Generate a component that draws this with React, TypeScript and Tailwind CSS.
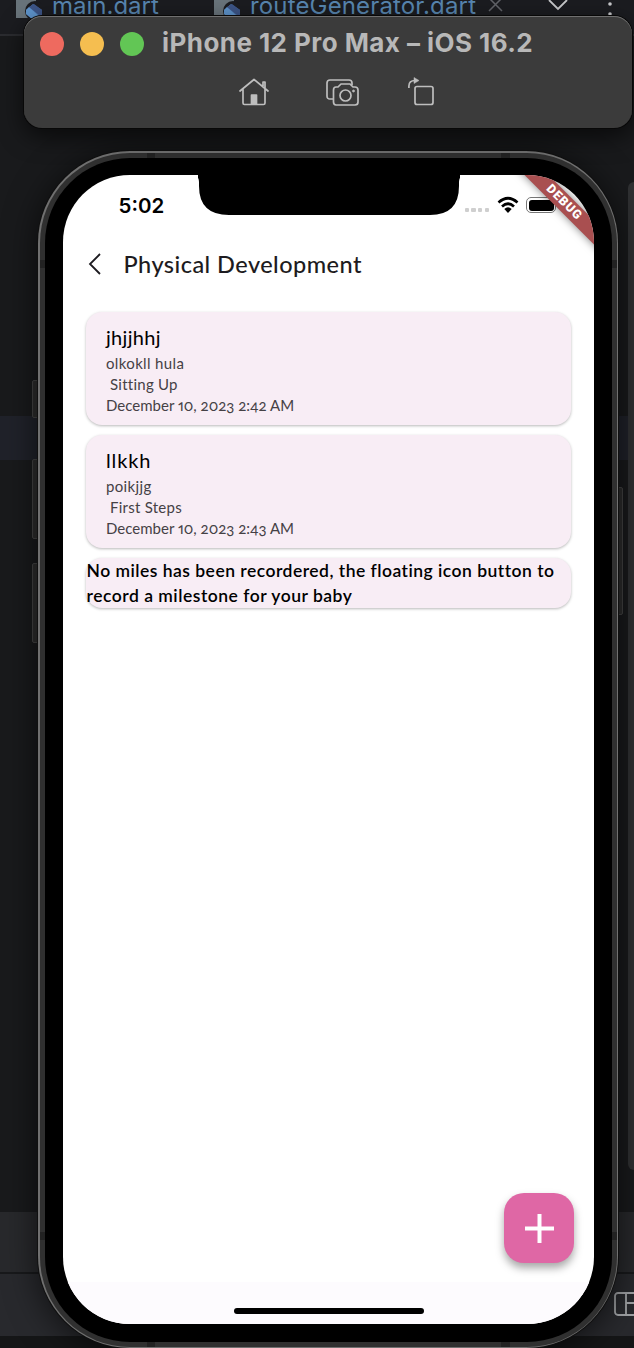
import React from "react";

type Milestone = { title: string; note: string; stage: string; date: string; titleClass: string; noteClass: string; stageClass: string };

const milestones: Milestone[] = [
  { title: "jhjjhhj", note: "olkokll hula", stage: "Sitting Up", date: "December 10, 2023 2:42 AM", titleClass: "tracking-[0.3px]", noteClass: "tracking-[0.35px]", stageClass: "tracking-[0.25px]" },
  { title: "llkkh", note: "poikjjg", stage: "First Steps", date: "December 10, 2023 2:43 AM", titleClass: "tracking-[0.9px]", noteClass: "tracking-[0.35px]", stageClass: "tracking-[0.25px]" },
];

function DartIcon() {
  return (
    <svg width="26" height="19" viewBox="0 0 26 19" className="block shrink-0">
      <path d="M0 0H20V18H0Z" fill="#69747b" />
      <circle cx="19" cy="11" r="10" fill="#1b1c20" />
      <path d="M10 10L17 4L26 10V15L22 19H16L10 14Z" fill="#4c76ad" />
      <path d="M10 10L13 7L24 17L22 19H16L10 14Z" fill="#5e94cc" />
      <path d="M13 7L18 4L26 10V15H23Z" fill="#3d5587" />
    </svg>
  );
}

function Editor() {
  return (
    <div className="flex h-full flex-col bg-[#191a1c]">
      <div className="relative flex h-[36px] shrink-0 items-start border-b-2 border-[#2b2c30] bg-[#1b1c20] text-[24px] text-[#5886b0]">
        <div className="ml-[16px] flex w-[198px] items-start">
          <DartIcon />
          <span className="-mt-[8px] ml-[10px] leading-[28px] tracking-[0px]">main.dart</span>
        </div>
        <DartIcon />
        <span className="-mt-[8px] ml-[10px] w-[227px] shrink-0 leading-[28px] tracking-[0.15px]">routeGenerator.dart</span>
        <svg width="147" height="18" viewBox="0 0 147 18" className="ml-[8px] shrink-0" fill="none">
          <path d="M4 -2L17 11M17 -2L4 11" stroke="#626469" strokeWidth="1.500" />
          <path d="M64 0L73 9L82 0" stroke="#c8c9cb" strokeWidth="1.800" />
          <circle cx="125" cy="4" r="1.800" fill="#c8c9cb" />
          <circle cx="125" cy="14" r="1.800" fill="#c8c9cb" />
        </svg>
      </div>
      <div className="h-[380px] shrink-0" />
      <div className="h-[44px] shrink-0 bg-[#20222a]" />
      <div className="h-[752px] shrink-0" />
      <div className="h-[60px] shrink-0 bg-[#28292c]" />
      <div className="h-[2px] shrink-0 bg-[#18191b]" />
      <div className="flex h-[62px] shrink-0 justify-end bg-[#28292d]">
        <svg width="20" height="26" viewBox="0 0 20 26" fill="none" className="mt-[17px]" stroke="#a0a2a5" strokeWidth="1.800">
          <rect x="1" y="2" width="25" height="22" rx="3" />
          <path d="M12 2V24M12 12H24" />
        </svg>
      </div>
      <div className="grow bg-[#151617]" />
    </div>
  );
}

function SimulatorBar() {
  return (
    <div className="absolute left-[24px] top-[16px] h-[112px] w-[608px] rounded-[18px] bg-[#3b3b3b] shadow-[0_0_0_1px_#080808,0_8px_24px_rgba(0,0,0,0.65),inset_0_1px_0_#707070]">
      <div className="flex h-[55px] items-center pl-[16px]">
        <div className="flex shrink-0 gap-[16px]">
          <div className="size-[24px] rounded-full bg-[#ee6a5f]" />
          <div className="size-[24px] rounded-full bg-[#f5be50]" />
          <div className="size-[24px] rounded-full bg-[#62c655]" />
        </div>
        <div className="-mt-[2px] ml-[18px] whitespace-nowrap text-[26px] font-bold leading-[32px] tracking-[0.440px] text-[#b8b8b8]">iPhone 12 Pro Max – iOS 16.2</div>
      </div>
      <div className="flex pl-[214px] pt-[4px] text-[#bebebe]">
        <svg width="32" height="32" viewBox="0 0 32 32" fill="none" stroke="currentColor" strokeWidth="1.700" strokeLinecap="round" strokeLinejoin="round">
          <path d="M2 16L16 4.500L30 16M5 14V28Q5 29.500 6.500 29.500H25.500Q27 29.500 27 28V14M25 11V7H27V13" />
          <path d="M13.500 29V20H18.500V29Z" fill="currentColor" />
        </svg>
        <svg width="36" height="32" viewBox="0 0 36 32" className="ml-[56px]" fill="none" stroke="currentColor" strokeWidth="1.700" strokeLinejoin="round">
          <path d="M7 24H4Q1 24 1 21V8Q1 5 4 5H23Q26 5 26 8V10" />
          <path d="M10 12H12L15 9H24L27 12H29Q32 12 32 15V27Q32 30 29 30H10Q7.500 30 7.500 27V15Q7.500 12 10 12Z" />
          <circle cx="19.500" cy="20.500" r="5.500" />
          <circle cx="27.500" cy="16" r="1" fill="currentColor" strokeWidth="0.800" />
        </svg>
        <svg width="30" height="32" viewBox="0 0 30 32" className="ml-[46px]" fill="none" stroke="currentColor" strokeWidth="1.700">
          <rect x="7" y="11.500" width="18" height="18" rx="2" />
          <path d="M0.900 13V11Q0.900 5.500 7 5.500" />
          <path d="M6 2.500L11 5.500L6 8.500Z" fill="currentColor" strokeWidth="0.500" />
        </svg>
      </div>
    </div>
  );
}

function StatusBar() {
  return (
    <div className="flex h-[60px] items-start">
      <div className="ml-[56px] mt-[17px] w-[79px] font-[Inter] text-[20.500px] font-semibold leading-[28px] tracking-[0px] text-black">5:02</div>
      <svg width="262" height="42" viewBox="0 0 262 42" className="block shrink-0">
        <path d="M-4 0H266Q261 1 261 7V11Q261 40 232 40H31Q1 40 1 11V7Q1 1 -4 0Z" fill="#000" />
      </svg>
      <div className="ml-[5px] mt-[33px] flex gap-[2.500px]">
        {[0, 1, 2, 3].map((i) => (
          <span key={i} className="size-[4.300px] rounded-[1px] bg-[#cfcfcf]" />
        ))}
      </div>
      <svg width="22" height="18" viewBox="0 0 22 18" className="ml-[7.500px] mt-[21px] shrink-0" fill="none" stroke="#000" strokeWidth="2.700">
        <path d="M1.500 6.500Q11 -2 20.500 6.500M5 10.500Q11 5 17 10.500" />
        <path d="M7.300 13Q11 9.500 14.700 13L11 17Z" fill="#000" stroke="none" />
      </svg>
      <div className="ml-[7.500px] mt-[22px] h-[16px] w-[30px] shrink-0 rounded-[5px] border border-[#777] p-[1.500px]">
        <div className="h-full rounded-[3px] bg-black" />
      </div>
    </div>
  );
}

function MilestoneCard({ item }: { item: Milestone }) {
  return (
    <article className="h-[113px] rounded-[16px] bg-[#f8edf5] pl-[20.500px] pt-[11px] shadow-[0_1px_3px_rgba(0,0,0,0.28)]">
      <h2 className={"mb-[2px] text-[20px] leading-[28px] text-black " + item.titleClass}>{item.title}</h2>
      <p className={"text-[15px] leading-[21px] text-[#454145] " + item.noteClass}>{item.note}</p>
      <p className={"pl-[4px] text-[15px] leading-[21px] text-[#454145] " + item.stageClass}>{item.stage}</p>
      <p className="text-[15px] leading-[21px] tracking-[0.010px] text-[#454145] oldstyle-nums proportional-nums">{item.date}</p>
    </article>
  );
}

function Phone() {
  return (
    <>
      {/* side keys */}
      <div className="absolute left-[32px] top-[380px] h-[38px] w-[10px] rounded-[2px] border border-[#444] bg-[#2d2d2d]" />
      <div className="absolute left-[32px] top-[459px] h-[80px] w-[10px] rounded-[2px] border border-[#444] bg-[#2d2d2d]" />
      <div className="absolute left-[32px] top-[563px] h-[80px] w-[10px] rounded-[2px] border border-[#444] bg-[#2d2d2d]" />
      <div className="absolute left-[613px] top-[487px] h-[128px] w-[10px] rounded-[2px] border border-[#444] bg-[#2d2d2d]" />
      <div className="absolute left-[38px] top-[151px] h-[1197px] w-[580px] rounded-[92px] bg-[#707070] p-[1.500px] shadow-[0_0_0_1px_#101010,0_4px_34px_rgba(0,0,0,0.65)]">
        <div className="h-full rounded-[90px] bg-[#303030] p-[5px]">
          <div className="h-full rounded-[85px] bg-black px-[18px] pb-[17px] pt-[17.500px]">
            <main className="relative flex h-[1149px] w-[531px] flex-col overflow-hidden rounded-[67px] bg-white font-[Lato]">
              <StatusBar />
              <header className="flex h-[60px] items-center pl-[24px]">
                <svg width="16" height="24" viewBox="0 0 16 24" fill="none" stroke="#1d1b20" strokeWidth="1.800" className="-mt-[3px]">
                  <path d="M13 2L3 12L13 22" />
                </svg>
                <h1 className="-mt-[2px] ml-[21px] text-[23.500px] font-medium leading-[32px] tracking-[0.460px] text-[#1d1b20]">Physical Development</h1>
              </header>
              <section className="mt-[17px] flex grow flex-col gap-[10px] px-[23px]">
                {milestones.map((m) => (
                  <MilestoneCard key={m.title} item={m} />
                ))}
                <div className="h-[50px] rounded-[16px] bg-[#f8edf5] pl-[1px] text-[17.500px] font-semibold leading-[25px] text-black shadow-[0_1px_3px_rgba(0,0,0,0.28)]">
                  <p className="whitespace-nowrap tracking-[0.480px]">No miles has been recordered, the floating icon button to</p>
                  <p className="whitespace-nowrap tracking-[0.510px]">record a milestone for your baby</p>
                </div>
              </section>
              <footer className="flex h-[42px] shrink-0 items-end justify-center bg-[#fdfbfe] pb-[10px] pl-[1px]">
                <div className="h-[6px] w-[190px] rounded-full bg-black" />
              </footer>
              <button aria-label="Add" className="absolute bottom-[61.500px] right-[19.500px] flex size-[70px] items-center justify-center rounded-[20px] bg-[#df67a5] shadow-[0_5px_9px_rgba(0,0,0,0.35)]">
                <svg width="30" height="30" viewBox="0 0 30 30" stroke="#fff" strokeWidth="4">
                  <path d="M15.500 1V30M1 15.500H30" />
                </svg>
              </button>
              <div className="absolute -right-[39px] top-[18px] flex h-[17px] w-[140px] rotate-45 items-center justify-center bg-[#a94f50] pl-[3px] font-[Roboto] text-[12.500px] font-black tracking-[0.900px] text-white shadow-[0_0_8px_rgba(0,0,0,0.5)]">DEBUG</div>
            </main>
          </div>
        </div>
      </div>
      {/* antenna bands */}
      <div className="absolute left-[147px] top-[153px] h-[5px] w-[8px] bg-[#222]" />
      <div className="absolute left-[501px] top-[153px] h-[5px] w-[9px] bg-[#222]" />
      <div className="absolute left-[40px] top-[260px] h-[8px] w-[5px] bg-[#222]" />
      <div className="absolute left-[612px] top-[260px] h-[8px] w-[5px] bg-[#222]" />
      <div className="absolute left-[40px] top-[1232px] h-[8px] w-[5px] bg-[#222]" />
      <div className="absolute left-[612px] top-[1232px] h-[8px] w-[5px] bg-[#222]" />
      <div className="absolute left-[147px] top-[1342px] h-[5px] w-[8px] bg-[#222]" />
      <div className="absolute left-[501px] top-[1342px] h-[5px] w-[9px] bg-[#222]" />
    </>
  );
}

export default function App() {
  return (
    <div className="relative h-[1348px] w-[634px] overflow-hidden font-[Inter,sans-serif]">
      <Editor />
      <div className="absolute left-[628px] top-[182px] h-[988px] w-[12px] rounded-[6px] bg-[#303133]" />
      <Phone />
      <SimulatorBar />
    </div>
  );
}
